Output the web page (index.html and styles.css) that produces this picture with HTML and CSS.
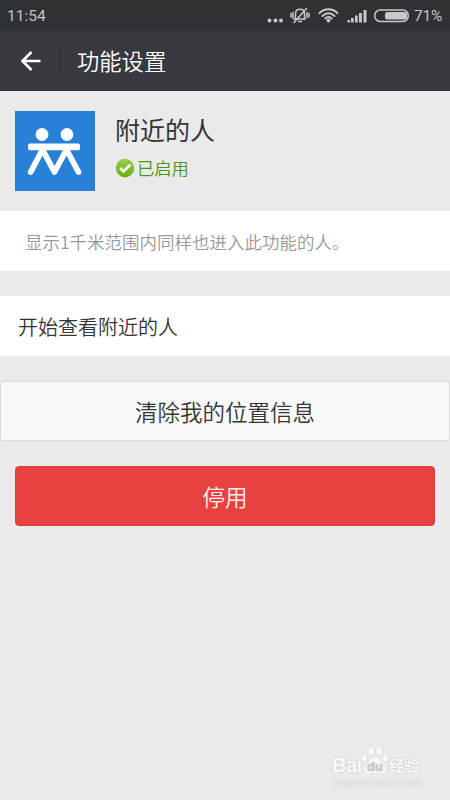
FILE: index.html
```html
<!DOCTYPE html>
<html lang="zh-CN">
<head>
<meta charset="utf-8">
<title>功能设置</title>
<link rel="stylesheet" href="styles.css">
</head>
<body>
<div class="status">
  <span class="time">11:54</span>
  <svg class="status-icons" width="146" height="31" viewBox="0 0 146 31">
    <g fill="#c9c9cb">
      <circle cx="5.500" cy="20.500" r="1.900"/><circle cx="11.500" cy="20.500" r="1.900"/><circle cx="17" cy="20.500" r="1.900"/>
      <circle cx="64.500" cy="20.500" r="1.900"/>
      <path d="M83.500 22.500v-2.500h2.500v2.500zM87 22.500v-4.500h2.700v4.500zM91 22.500v-7h2.700v7zM95 22.500v-9.500h2.900v9.500zM99.500 22.500v-12.500h3v12.500z"/>
      <rect x="121" y="12" width="22" height="7.500" rx="2.500"/>
    </g>
    <g fill="none" stroke="#c9c9cb" stroke-width="1.500" stroke-linecap="round">
      <path d="M29.500 19h12M31.500 19v-5c0-3 2-4.700 4.500-4.700s4.500 1.700 4.500 4.700v5M34.500 21.500h3M30 22.500L42.500 8.500"/>
      <path d="M29 12.500v5M27 13.500v3.500M43 12.500v5M45 13.500v3.500"/>
      <path d="M55.500 13.200c5-5.200 13-5.200 18 0M58.500 16c3.500-3.600 8.500-3.600 12 0M61.300 18.500c2-2 4.400-2 6.400 0" stroke-width="1.900"/>
      <rect x="110.700" y="10" width="33.600" height="11.500" rx="5.500"/>
    </g>
  </svg>
  <span class="percent">71%</span>
</div>
<header class="bar">
  <svg class="back" width="22" height="22" viewBox="0 0 22 22"><path d="M20.500 11H3M11.500 2L2.500 11l9 9" fill="none" stroke="#fff" stroke-width="2.600"/></svg>
  <h1>功能设置</h1>
</header>
<main>
  <section class="profile">
    <svg class="logo" width="80" height="80" viewBox="0 0 80 80">
      <rect width="80" height="80" fill="#2881d7"/>
      <g fill="#fff">
        <circle cx="27" cy="23.500" r="6.400"/><circle cx="52" cy="23.500" r="6.400"/>
        <rect x="13" y="32.500" width="52" height="6.800" rx="2"/>
      </g>
      <path d="M15.700 61L26.500 40.500M28.500 40.500L39.500 61 50.500 40.500M52.500 40.500L63.500 61" fill="none" stroke="#fff" stroke-width="5.800" stroke-linecap="round" stroke-linejoin="round"/>
    </svg>
    <div>
      <h2>附近的人</h2>
      <p class="enabled">
        <svg width="20" height="20" viewBox="0 0 20 20">
          <defs><linearGradient id="green" x2="0" y2="1"><stop stop-color="#9ccb4c"/><stop offset="1" stop-color="#65b20c"/></linearGradient></defs>
          <circle cx="10" cy="10" r="9.200" fill="url(#green)"/>
          <path d="M5.300 10l3.200 3.400 6.800-6.600" fill="none" stroke="#fff" stroke-width="2.700"/>
        </svg><span>已启用</span>
      </p>
    </div>
  </section>
  <p class="row hint">显示1千米范围内同样也进入此功能的人。</p>
  <div class="row view">开始查看附近的人</div>
  <button class="clear">清除我的位置信息</button>
  <button class="disable">停用</button>
</main>
<div class="watermark">
  <div class="brand"><span class="bai">Bai</span><svg width="28" height="30" viewBox="0 0 28 30">
    <g fill="#fafafa" stroke="#d8d8d8" stroke-width=".7"><ellipse cx="3.500" cy="12" rx="3" ry="4"/><ellipse cx="10" cy="5" rx="3.100" ry="4.400"/><ellipse cx="18" cy="5" rx="3.100" ry="4.400"/><ellipse cx="24.500" cy="12" rx="3" ry="4"/><path d="M14 11c4 0 5.500 4 8.500 7 5.500 5 2.500 11-3 10-3-.7-8-.7-11 0-5.500 1-8.500-5-3-10 3-3 4.500-7 8.500-7z"/></g>
    <text x="14" y="25" text-anchor="middle">du</text>
  </svg><span class="cn">经验</span></div>
  <div class="site">jingyan.baidu.com</div>
</div>
</body>
</html>
```
FILE: styles.css
```css
* { box-sizing: border-box; }
body {
  margin: 0;
  height: 800px;
  overflow: hidden;
  background: #eaeaea;
  color: #353535;
  font-family: "Noto Sans CJK SC", sans-serif;
  font-weight: 350;
}
h1, h2, p { margin: 0; font-weight: inherit; }
.status {
  display: flex;
  align-items: center;
  height: 31px;
  padding: 0 8px 0 7px;
  background: #303135;
  color: #c4c4c6;
  font: 15.500px/31px Roboto, sans-serif;
}
.time { padding-top: 2px; }
.status-icons { margin-left: auto; }
.percent { width: 28px; margin-left: 4px; padding-top: 1px; letter-spacing: -.2px; }
.bar {
  display: flex;
  align-items: center;
  height: 60px;
  background: #393a3f;
  color: #fff;
}
.back { margin: 0 18px 0 20px; }
.bar h1 {
  height: 30px;
  padding-left: 16px;
  border-left: 1px solid #2d2e32;
  font-size: 22.300px;
  line-height: 29px;
}
.profile { display: flex; gap: 20px; height: 120px; padding: 20px 15px; }
.profile h2 { font-size: 25px; font-weight: 400; line-height: 36px; }
.enabled {
  display: flex;
  align-items: center;
  gap: 2px;
  margin-top: 11px;
  color: #4c950b;
  font-size: 17.300px;
  line-height: 20px;
}
.row { height: 60px; background: #fff; line-height: 61px; }
.hint { padding-left: 25px; color: #999; font-size: 17.500px; }
.view { margin-top: 25px; padding-left: 18px; font-size: 20px; }
button { display: block; padding: 0; font-family: inherit; font-size: 22.500px; font-weight: inherit; }
.clear {
  width: 450px;
  height: 60px;
  margin-top: 25px;
  border: 1px solid #dadada;
  border-radius: 3px;
  background: #f8f8f8;
  color: #353535;
}
.disable {
  width: 420px;
  height: 60px;
  margin: 25px 15px 0;
  border: 1px solid #ca4540;
  border-radius: 4px;
  background: #e64340;
  color: #fff0ed;
}
.watermark {
  position: absolute;
  top: 746px;
  left: 332px;
  color: #fafafa;
  text-shadow: 0 0 2px #bbb;
}
.brand { display: flex; align-items: flex-end; height: 30px; font: bold 20px/22px "Liberation Sans", sans-serif; }
.brand svg { flex: none; }
.bai { width: 29px; letter-spacing: -.5px; }
.brand text { fill: #c8c8c8; font-size: 13px; }
.brand .cn { font: bold 15px/23px "Noto Sans CJK SC", sans-serif; }
.site { padding-left: 1px; font: 11px/13px "Liberation Sans", sans-serif; color: #efefef; }
```
